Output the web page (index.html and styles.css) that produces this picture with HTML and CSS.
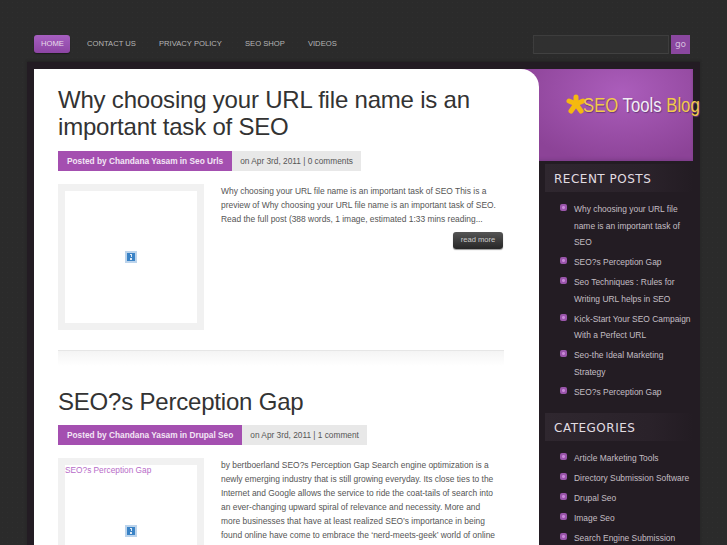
FILE: index.html
```html
<!DOCTYPE html>
<html lang="en">
<head>
<meta charset="utf-8">
<title>SEO Tools Blog</title>
<link rel="stylesheet" href="styles.css">
</head>
<body>
<div class="page">
  <header class="topbar">
    <nav class="nav">
      <a class="nav-link active" href="#">HOME</a>
      <a class="nav-link" href="#">CONTACT US</a>
      <a class="nav-link" href="#">PRIVACY POLICY</a>
      <a class="nav-link" href="#">SEO SHOP</a>
      <a class="nav-link" href="#">VIDEOS</a>
    </nav>
    <form class="search">
      <div class="search-input"></div>
      <div class="search-go">go</div>
    </form>
  </header>
  <div class="wrap">
    <main class="main">
      <article class="post">
        <h2 class="post-title">Why choosing your URL file name is an important task of SEO</h2>
        <div class="meta"><span class="meta-by">Posted by Chandana Yasam in Seo Urls</span><span class="meta-on">on Apr 3rd, 2011 | 0 comments</span></div>
        <div class="post-body">
          <div class="thumb">
            <div class="thumb-inner">
              <svg class="broken" viewBox="0 0 12 12"><rect width="12" height="12" fill="#bcd4ec"/><rect x="2" y="2" width="8" height="8" fill="#3a83c6"/><rect x="5" y="3" width="2" height="1" fill="#dfeaf5"/><rect x="6" y="4" width="1" height="2" fill="#dfeaf5"/><rect x="5" y="7" width="2" height="2" fill="#dfeaf5"/></svg>
            </div>
          </div>
          <div class="excerpt">
            <p class="excerpt-text">Why choosing your URL file name is an important task of SEO This is a preview of Why choosing your URL file name is an important task of SEO. Read the full post (388 words, 1 image, estimated 1:33 mins reading...</p>
            <div class="more-row"><a class="more" href="#">read more</a></div>
          </div>
        </div>
      </article>
      <div class="separator"></div>
      <article class="post second">
        <h2 class="post-title">SEO?s Perception Gap</h2>
        <div class="meta"><span class="meta-by">Posted by Chandana Yasam in Drupal Seo</span><span class="meta-on">on Apr 3rd, 2011 | 1 comment</span></div>
        <div class="post-body">
          <div class="thumb">
            <div class="thumb-inner">
              <a class="thumb-link" href="#">SEO?s Perception Gap</a>
              <svg class="broken" viewBox="0 0 12 12"><rect width="12" height="12" fill="#bcd4ec"/><rect x="2" y="2" width="8" height="8" fill="#3a83c6"/><rect x="5" y="3" width="2" height="1" fill="#dfeaf5"/><rect x="6" y="4" width="1" height="2" fill="#dfeaf5"/><rect x="5" y="7" width="2" height="2" fill="#dfeaf5"/></svg>
            </div>
          </div>
          <div class="excerpt">
            <p class="excerpt-text">by bertboerland SEO?s Perception Gap Search engine optimization is a newly emerging industry that is still growing everyday. Its close ties to the Internet and Google allows the service to ride the coat-tails of search into an ever-changing upward spiral of relevance and necessity. More and more businesses that have at least realized SEO’s importance in being found online have come to embrace the ‘nerd-meets-geek’ world of online marketing. However, plenty are not clear what, how SEO, the same path</p>
          </div>
        </div>
      </article>
    </main>
    <aside class="side">
      <div class="logo">
        <svg class="logo-star" viewBox="0 0 20 20"><g stroke="#f5b90f" stroke-width="5" stroke-linecap="round"><line x1="10" y1="10" x2="10" y2="3"/><line x1="10" y1="10" x2="17" y2="7"/><line x1="10" y1="10" x2="15" y2="17"/><line x1="10" y1="10" x2="5" y2="17"/><line x1="10" y1="10" x2="3" y2="7"/></g></svg>
        <span class="logo-text"><span class="gold">SEO</span> Tools <span class="gold">Blog</span></span>
      </div>
      <section class="widget">
        <h3 class="widget-title">RECENT POSTS</h3>
        <ul class="widget-list">
          <li class="widget-item">Why choosing your URL file name is an important task of SEO</li>
          <li class="widget-item">SEO?s Perception Gap</li>
          <li class="widget-item">Seo Techniques : Rules for Writing URL helps in SEO</li>
          <li class="widget-item">Kick-Start Your SEO Campaign With a Perfect URL</li>
          <li class="widget-item">Seo-the Ideal Marketing Strategy</li>
          <li class="widget-item">SEO?s Perception Gap</li>
        </ul>
      </section>
      <section class="widget">
        <h3 class="widget-title">CATEGORIES</h3>
        <ul class="widget-list">
          <li class="widget-item">Article Marketing Tools</li>
          <li class="widget-item">Directory Submission Software</li>
          <li class="widget-item">Drupal Seo</li>
          <li class="widget-item">Image Seo</li>
          <li class="widget-item">Search Engine Submission</li>
        </ul>
      </section>
    </aside>
  </div>
</div>
</body>
</html>
```
FILE: styles.css
```css
html, body {
  margin: 0;
  padding: 0;
  height: 545px;
  overflow: hidden;
}
body {
  background-color: #2b2b2b;
  background-image: radial-gradient(#2f2f2f 0.6px, transparent 0.8px);
  background-size: 5px 5px;
  font-family: "Liberation Sans", Arial, sans-serif;
  color: #555;
}
.page {
  width: 727px;
  height: 545px;
  overflow: hidden;
}
.topbar {
  display: flex;
  justify-content: space-between;
  padding: 35px 37px 0 34px;
  box-sizing: border-box;
  height: 62px;
}
.nav {
  display: flex;
  gap: 23px;
  height: 18px;
}
.nav-link {
  display: block;
  font-size: 7.65px;
  line-height: 18px;
  color: #b5b5b5;
  text-decoration: none;
}
.nav-link.active {
  box-sizing: border-box;
  width: 36px;
  margin-right: -6px;
  padding-left: 7px;
  background: linear-gradient(#a65fc0, #8d45a4);
  color: #e8dcea;
  border-radius: 3px;
  box-shadow: 0 1px 1px #1c1c1c;
}
.search {
  display: flex;
  gap: 2px;
  margin: 0;
}
.search-input {
  width: 134px;
  height: 17px;
  background: #303030;
  border: 1px solid #3d3d3d;
  border-bottom-color: #414141;
}
.search-go {
  width: 19px;
  height: 19px;
  background: #8a479f;
  color: #d5bede;
  font-size: 9px;
  line-height: 18px;
  text-align: center;
  font-family: "DejaVu Sans", sans-serif;
}
.wrap {
  display: flex;
  width: 659px;
  margin-left: 27px;
  padding: 7px 7px 0;
  background: #231c23;
  box-shadow: 0 -1px 2px #222;
  height: 483px;
}
.main {
  position: relative;
  z-index: 1;
  width: 505px;
  box-sizing: border-box;
  flex: none;
  background: #fff;
  border-top-right-radius: 18px;
  padding: 0 35px 0 24px;
}
.post-title {
  margin: 0;
  padding-top: 17px;
  font-weight: 400;
  font-size: 24px;
  letter-spacing: -0.2px;
  line-height: 27px;
  color: #333;
}
.meta {
  display: flex;
  margin-top: 11px;
  height: 20px;
  font-size: 8.3px;
  line-height: 20px;
}
.meta-by {
  background: #a44fb0;
  color: #f3e6f5;
  font-weight: 700;
  padding: 0 9px;
}
.meta-on {
  background: #e8e8e8;
  color: #555;
  padding: 0 8px;
}
.post-body {
  display: flex;
  gap: 17px;
  margin-top: 13px;
}
.thumb {
  flex: none;
  width: 146px;
  height: 146px;
  box-sizing: border-box;
  border: 7px solid #f1f1f1;
  background: #fff;
}
.thumb-inner {
  position: relative;
  height: 132px;
  display: flex;
  align-items: center;
  justify-content: center;
}
.broken {
  width: 12px;
  height: 12px;
}
.thumb-link {
  position: absolute;
  left: 0;
  top: 0;
  font-size: 8.3px;
  line-height: 11px;
  color: #b76cc8;
  text-decoration: none;
}
.excerpt {
  flex: 1;
}
.excerpt-text {
  margin: 0;
  max-width: 279px;
  font-size: 8.44px;
  line-height: 14px;
  color: #555;
}
.more-row {
  display: flex;
  justify-content: flex-end;
  margin: 6px 1px 0 0;
}
.more {
  display: block;
  width: 50px;
  height: 17px;
  background: linear-gradient(#555, #262626);
  border-radius: 3px;
  box-shadow: 0 1px 1px #999;
  color: #ccc;
  font-size: 7.6px;
  line-height: 16px;
  text-align: center;
  text-decoration: none;
}
.separator {
  height: 15px;
  margin-top: 20px;
  width: 446px;
  border-top: 1px solid #e6e6e6;
  background: linear-gradient(#f4f4f4, #fff);
}
.second .post-title {
  padding-top: 22px;
}
.second .meta {
  margin-top: 10px;
}
.side {
  width: 154px;
  flex: none;
}
.logo {
  position: relative;
  height: 92px;
  margin-left: -24px;
  background: radial-gradient(ellipse at 60% 25%, #ab5dbb, #8c4397 75%);
  box-shadow: inset 0 -2px 3px #7f3e8c;
}
.logo-star {
  position: absolute;
  left: 51px;
  top: 25px;
  width: 20px;
  height: 20px;
}
.logo-text {
  position: absolute;
  left: 68px;
  top: 25px;
  font-family: "Liberation Sans", sans-serif;
  font-size: 20px;
  line-height: 22px;
  color: #f3eef6;
  white-space: nowrap;
  text-shadow: 1px 1px 1px #6a3a7a;
  transform: scaleX(0.835);
  transform-origin: left center;
}
.gold {
  color: #f2c94c;
}
.widget {
  padding-left: 6px;
}
.widget-title {
  margin: 3px 0 0;
  height: 28px;
  padding-left: 9px;
  font-family: "DejaVu Sans", sans-serif;
  font-weight: 400;
  font-size: 12px;
  line-height: 31px;
  letter-spacing: 0.5px;
  color: #e2dde2;
  background: linear-gradient(90deg, #2f272f, #2a222a 70%, #231c23);
}
.widget-list {
  list-style: none;
  margin: 0;
  padding: 9px 0 6px 29px;
}
.widget-item {
  position: relative;
  font-size: 8.44px;
  line-height: 16.6px;
  color: #c3bec3;
  padding-bottom: 3.4px;
}
.widget-item::before {
  content: "";
  position: absolute;
  left: -14px;
  top: 3px;
  width: 7px;
  height: 7px;
  border-radius: 2px;
  background: radial-gradient(#c98ad8 1px, #9a55ab 2px);
}
```
